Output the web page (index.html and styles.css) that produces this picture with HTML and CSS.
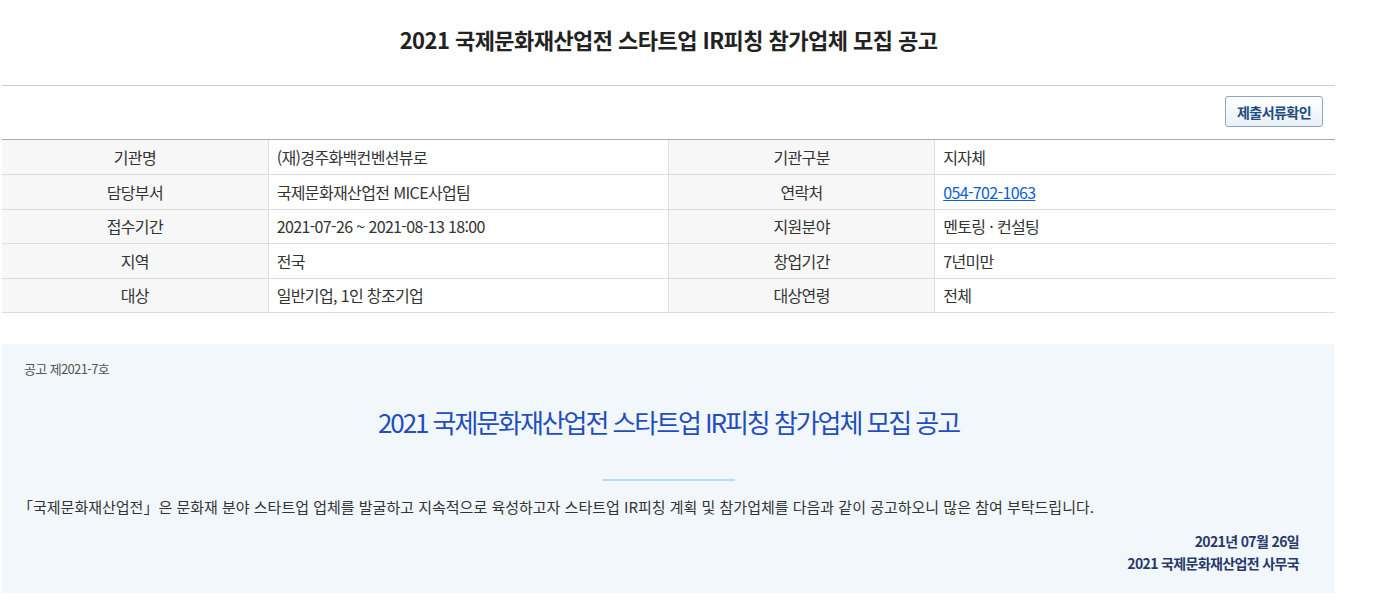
FILE: index.html
```html
<!DOCTYPE html>
<html lang="ko">
<head>
<meta charset="utf-8">
<title>2021 국제문화재산업전 스타트업 IR피칭 참가업체 모집 공고</title>
<link rel="stylesheet" href="styles.css">
</head>
<body>
<div class="page">
  <h1 class="page-title">2021 국제문화재산업전 스타트업 IR피칭 참가업체 모집 공고</h1>
  <div class="toolbar">
    <button class="btn-docs" type="button">제출서류확인</button>
  </div>
  <table class="info">
    <colgroup>
      <col class="c-th"><col class="c-td"><col class="c-th"><col class="c-td">
    </colgroup>
    <tbody>
      <tr><th>기관명</th><td>(재)경주화백컨벤션뷰로</td><th>기관구분</th><td>지자체</td></tr>
      <tr><th>담당부서</th><td>국제문화재산업전 MICE사업팀</td><th>연락처</th><td><a href="#" class="tel">054-702-1063</a></td></tr>
      <tr><th>접수기간</th><td>2021-07-26 ~ 2021-08-13 18:00</td><th>지원분야</th><td>멘토링 · 컨설팅</td></tr>
      <tr><th>지역</th><td>전국</td><th>창업기간</th><td>7년미만</td></tr>
      <tr><th>대상</th><td>일반기업, 1인 창조기업</td><th>대상연령</th><td>전체</td></tr>
    </tbody>
  </table>
  <section class="notice">
    <p class="notice-no">공고 제2021-7호</p>
    <h2 class="notice-title">2021 국제문화재산업전 스타트업 IR피칭 참가업체 모집 공고</h2>
    <div class="divider"></div>
    <p class="notice-body">「국제문화재산업전」은 문화재 분야 스타트업 업체를 발굴하고 지속적으로 육성하고자 스타트업 IR피칭 계획 및 참가업체를 다음과 같이 공고하오니 많은 참여 부탁드립니다.</p>
    <div class="sign">
      <p>2021년 07월 26일</p>
      <p>2021 국제문화재산업전 사무국</p>
    </div>
  </section>
</div>
</body>
</html>
```
FILE: styles.css
```css
* { box-sizing: border-box; }
html, body { margin: 0; padding: 0; background: #fff; }
body {
  font-family: "Noto Sans CJK KR", "Noto Sans", sans-serif;
  color: #333;
  letter-spacing: -0.04em;
}
.page {
  width: 1333px;
  margin-left: 2px;
}
.page-title {
  margin: 0;
  height: 86px;
  display: flex;
  align-items: center;
  justify-content: center;
  font-size: 22px;
  font-weight: 700;
  color: #222;
  letter-spacing: -0.025em;
  border-bottom: 1px solid #ccc;
  padding-bottom: 8px;
}
.toolbar {
  display: flex;
  justify-content: flex-end;
  padding: 10px 12px 12px 0;
  border-bottom: 1px solid #aaa;
}
.btn-docs {
  width: 98px;
  height: 31px;
  font-family: inherit;
  letter-spacing: -0.04em;
  font-size: 14px;
  font-weight: 700;
  color: #1c4d7e;
  border: 1px solid #8ea7c2;
  border-radius: 3px;
  background: linear-gradient(#ffffff, #eaf0f6);
  padding: 0;
  cursor: pointer;
}
.info {
  width: 100%;
  border-collapse: collapse;
  table-layout: fixed;
  font-size: 16px;
}
.info col.c-th { width: 266px; }
.info col.c-td { width: 400px; }
.info th, .info td {
  height: 34.5px;
  border-bottom: 1px solid #ddd;
  padding: 0 8px;
  font-weight: 400;
  color: #333;
  line-height: 1;
}
.info th {
  background: #f7f7f7;
  text-align: center;
  border-right: 1px solid #ddd;
}
.info td { text-align: left; }
.info td + th { border-left: 1px solid #ddd; }
.tel { color: #0b5fd1; text-decoration: underline; }
.notice {
  margin-top: 31px;
  background: #f2f7fc;
  padding: 15px 22px 20px 22px;
  height: 249px;
}
.notice-no {
  margin: 0;
  font-size: 13px;
  color: #555;
}
.notice-title {
  margin: 25px 0 0;
  text-align: center;
  font-size: 26px;
  font-weight: 400;
  color: #1f4fbf;
  letter-spacing: -0.08em;
}
.divider {
  width: 133px;
  height: 2px;
  background: #b9d9f7;
  margin: 39px auto 0;
}
.notice-body {
  margin: 15px 0 0;
  font-size: 15px;
  color: #333;
  letter-spacing: 0;
  text-indent: -0.4em;
}
.sign {
  margin-top: 13px;
  margin-right: 14px;
  text-align: right;
  font-size: 14px;
  font-weight: 700;
  color: #27396a;
}
.sign p { margin: 0; line-height: 22px; }
```
